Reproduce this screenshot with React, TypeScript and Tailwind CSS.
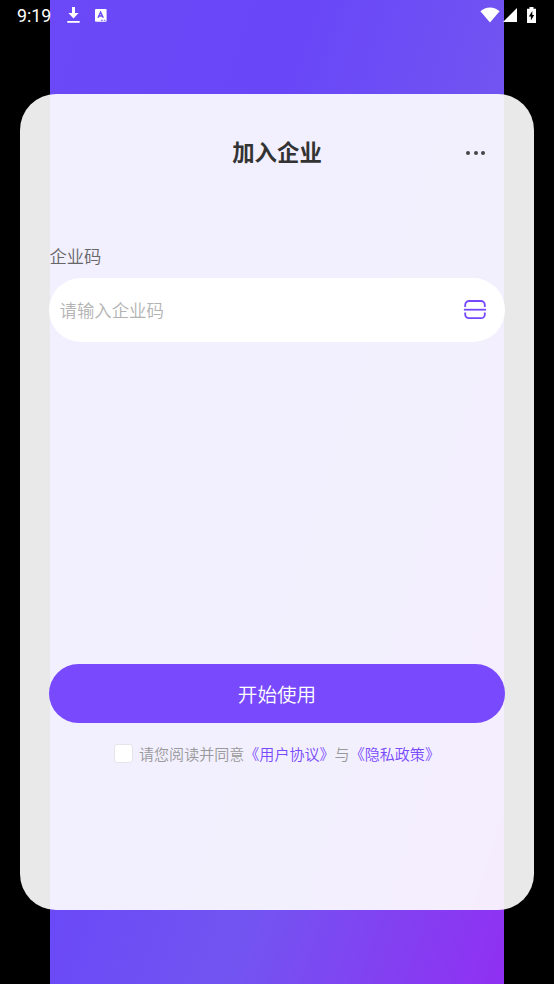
import React, { useState } from 'react';

const agreements = [
  { id: 'user', label: '《用户协议》', before: '请您阅读并同意' },
  { id: 'privacy', label: '《隐私政策》', before: '与' },
];

function DownloadIcon() {
  return (
    <svg width="13" height="17" viewBox="0 0 13 17" fill="white">
      <path d="M5 0h3v6h3.6L6.5 11.4 1.4 6H5z" />
      <path d="M.3 14h12.4v1.8H.3z" />
    </svg>
  );
}

function InputMethodIcon() {
  return (
    <svg width="12" height="13" viewBox="0 0 12 13">
      <rect width="11.6" height="12.8" rx="1" fill="white" />
      <path d="M3 8.8 5.6 3.2 8.3 8.8M4 7h3.3" fill="none" stroke="#6a49f7" strokeWidth="1.4" />
      <path d="M5.8 11.3h2M8.8 11.3h1.6" stroke="#6a49f7" strokeWidth="0.9" />
    </svg>
  );
}

function WifiIcon() {
  return (
    <svg width="20" height="16" viewBox="0 0 20 16" fill="white">
      <path d="M.4 4.3C3 1.8 6.3.5 10 .5s7 1.3 9.6 3.8L10 15.5z" />
    </svg>
  );
}

function SignalIcon() {
  return (
    <svg width="14" height="14" viewBox="0 0 14 14" fill="white">
      <path d="M14 0v14H0z" />
    </svg>
  );
}

function BatteryIcon() {
  return (
    <svg width="9" height="16" viewBox="0 0 9 16">
      <path d="M2.5 0h4v1.8H9V16H0V1.8h2.5z" fill="white" />
      <path d="M5.3 4 1.8 9.6h2.1v4L7.2 8H5.3z" fill="black" />
    </svg>
  );
}

function ScanIcon() {
  return (
    <svg width="24" height="20" viewBox="0 0 24 20" fill="none" stroke="#7548fc" strokeWidth="1.8">
      <path d="M2.2 7V5a4 4 0 0 1 4-4h11.6a4 4 0 0 1 4 4v2" />
      <path d="M.9 9.7h22.2" />
      <path d="M2.2 12.4v2a3.7 3.7 0 0 0 3.7 3.7h12.2a3.7 3.7 0 0 0 3.7-3.7v-2" />
    </svg>
  );
}

function StatusBar() {
  return (
    <div className="flex h-[30px] items-center pl-[17px] pr-[18px] text-white">
      <span className="w-[50px] pt-px font-['Roboto',sans-serif] text-[17.8px] leading-none">9:19</span>
      <div className="flex flex-1 items-center gap-[15px]">
        <DownloadIcon />
        <InputMethodIcon />
      </div>
      <div className="flex items-center">
        <WifiIcon />
        <div className="ml-[3px]"><SignalIcon /></div>
        <div className="ml-[10px]"><BatteryIcon /></div>
      </div>
    </div>
  );
}

export default function App() {
  const [code, setCode] = useState('');
  const [agreed, setAgreed] = useState(false);

  return (
    <div className="flex h-[984px] w-[554px] flex-col overflow-hidden bg-[linear-gradient(108deg,#6b49f8_0%,#6947f8_34%,#7255f1_64%,#9030f2_100%)] bg-[length:454px_984px] bg-[position:50px_0px] bg-no-repeat bg-black font-['Noto_Sans_CJK_SC',sans-serif]">
      <StatusBar />

      <main className="mx-5 mt-[63.5px] flex h-[816.5px] flex-col rounded-[36px] bg-white/[0.914] px-[29px]">
        <header className="mt-[41px] grid h-8 grid-cols-3 items-center">
          <h1 className="col-start-2 text-center text-[22.4px] font-bold leading-8 text-[#333333]">加入企业</h1>
          <button className="mr-5 mt-1 flex items-center gap-[3.5px] justify-self-end" aria-label="更多">
            <span className="size-1 rounded-full bg-[#454548]" />
            <span className="size-1 rounded-full bg-[#454548]" />
            <span className="size-1 rounded-full bg-[#454548]" />
          </button>
        </header>

        <label htmlFor="code" className="mt-[77px] pl-[0.5px] text-[17.3px] font-[350] leading-6 text-[#666666]">企业码</label>
        <div className="mt-[10px] flex h-16 items-center rounded-full bg-white pl-[10.5px] pr-[18px]">
          <input id="code" type="text" placeholder="请输入企业码" value={code} onChange={e => setCode(e.target.value)}
            className="min-w-0 flex-1 pt-[2px] text-[17.4px] font-[350] outline-none placeholder:text-[#b3b3b3]" />
          <ScanIcon />
        </div>

        <button className="mt-[322px] h-[59px] rounded-full bg-[#7849fd] pt-[2px] text-[19.6px] font-[350] text-white">开始使用</button>

        <div className="mt-[19.5px] flex h-[22px] items-center pl-[65px]">
          <button onClick={() => setAgreed(!agreed)} aria-label="同意"
            className={`mr-[6px] size-[19px] shrink-0 rounded-[3px] border ${agreed ? 'border-[#7849fd] bg-[#7849fd]' : 'border-[#e6e4ea] bg-white'}`} />
          <p className="whitespace-nowrap pt-px text-[15.05px] font-[350] leading-[22px] text-[#999999]">
            {agreements.map(a => (
              <React.Fragment key={a.id}>
                {a.before}<a className="text-[#7849fd]">{a.label}</a>
              </React.Fragment>
            ))}
          </p>
        </div>
      </main>
    </div>
  );
}
